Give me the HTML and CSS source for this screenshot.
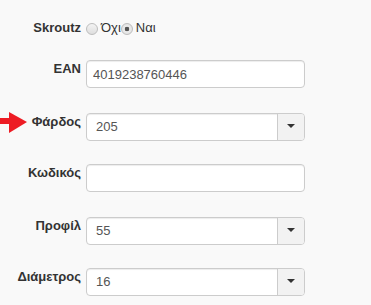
FILE: index.html
```html
<!DOCTYPE html>
<html lang="el">
<head>
    <meta charset="UTF-8">
    <title>Προϊόν</title>
    <meta name="viewport" content="width=device-width, initial-scale=1.0">
    <link rel="stylesheet" href="styles.css">
</head>
<body>
<form class="form">
    <div class="row row-radio">
        <label class="row-label">Skroutz</label>
        <div class="radios">
            <label class="radio"><input type="radio" name="skroutz">Όχι</label>
            <label class="radio"><input type="radio" name="skroutz" checked>Ναι</label>
        </div>
    </div>

    <div class="row">
        <label class="row-label">EAN</label>
        <input class="field" type="text" value="4019238760446">
    </div>

    <div class="row row-select">
        <svg class="pointer" width="28" height="22" viewBox="0 0 28 22">
            <rect x="0" y="6" width="10" height="6" fill="#ed1c24"/>
            <polygon points="9,0 27,10 9,21" fill="#ed1c24"/>
        </svg>
        <label class="row-label">Φάρδος</label>
        <div class="select">
            <span class="select-value">205</span>
            <span class="select-toggle"><span class="caret"></span></span>
        </div>
    </div>

    <div class="row">
        <label class="row-label">Κωδικός</label>
        <input class="field" type="text" value="">
    </div>

    <div class="row row-select">
        <label class="row-label">Προφίλ</label>
        <div class="select">
            <span class="select-value">55</span>
            <span class="select-toggle"><span class="caret"></span></span>
        </div>
    </div>

    <div class="row">
        <label class="row-label">Διάμετρος</label>
        <div class="select">
            <span class="select-value">16</span>
            <span class="select-toggle"><span class="caret"></span></span>
        </div>
    </div>
</form>
</body>
</html>
```

FILE: styles.css
```css
* {
    box-sizing: border-box;
}

body {
    margin: 0;
    padding-top: 20px;
    background-color: #f9f9f9;
    font-family: "Liberation Sans", Arial, sans-serif;
    font-size: 13px;
    color: #333;
}

.form {
    display: flex;
    flex-direction: column;
    gap: 24px;
}

.row {
    position: relative;
    display: flex;
    align-items: flex-start;
    gap: 5px;
}

.row-select {
    margin-top: 1px;
    margin-bottom: -1px;
}

.row-label {
    width: 81px;
    flex-shrink: 0;
    text-align: right;
    font-weight: bold;
    line-height: 18.57px;
}

.row-radio .row-label,
.radios {
    line-height: 16px;
}

.radios {
    display: flex;
}

.radio {
    display: inline-block;
    white-space: nowrap;
}

.radio input {
    -webkit-appearance: none;
    appearance: none;
    display: inline-block;
    width: 12px;
    height: 12px;
    margin: 0 3px 0 0;
    border: 1px solid #bdbdbd;
    border-radius: 50%;
    background: linear-gradient(#f3f3f3, #dedede);
    vertical-align: -3px;
}

.radio input:checked {
    background: radial-gradient(circle, #555 0, #555 2px, #ececec 2.6px, #dcdcdc 100%);
}

.field,
.select {
    width: 219px;
    height: 28px;
    border: 1px solid #ccc;
    border-radius: 4px;
    background-color: #fff;
    box-shadow: inset 0 1px 1px rgba(0, 0, 0, 0.075);
}

.field {
    padding: 0 6px;
    font-family: "Liberation Sans", Arial, sans-serif;
    font-size: 13px;
    color: #555;
    outline: none;
}

.select {
    display: flex;
    align-items: center;
    overflow: hidden;
}

.select-value {
    flex: 1;
    padding-left: 9px;
    color: #555;
    line-height: 26px;
}

.select-toggle {
    display: flex;
    align-items: center;
    justify-content: center;
    width: 27px;
    height: 100%;
    border-left: 1px solid #ccc;
    background-color: #f2f2f2;
}

.caret {
    width: 0;
    height: 0;
    margin-top: -3px;
    border-top: 4px solid #333;
    border-left: 4px solid transparent;
    border-right: 4px solid transparent;
}

.pointer {
    position: absolute;
    left: 0;
    top: -1px;
}
```
